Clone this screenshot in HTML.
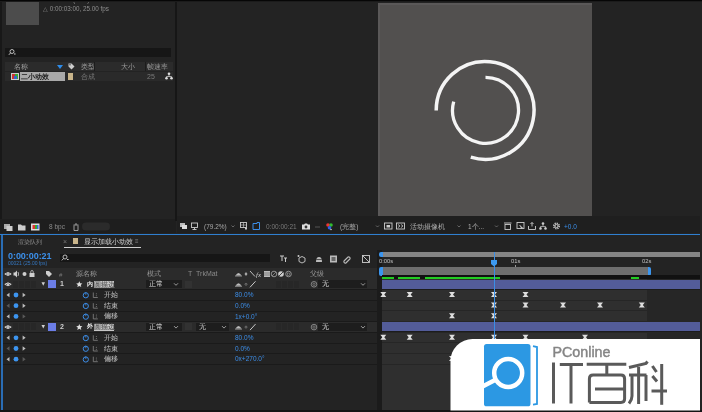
<!DOCTYPE html>
<html><head><meta charset="utf-8">
<style>
*{margin:0;padding:0;box-sizing:border-box}
html,body{width:702px;height:412px;overflow:hidden;background:#232323;font-family:"Liberation Sans",sans-serif;color:#9a9a9a}
.a{position:absolute}
.t{position:absolute;font-size:7px;line-height:8px;white-space:nowrap;will-change:transform}
svg{position:absolute;left:0;top:0}
body{-webkit-font-smoothing:antialiased}
.ga{will-change:transform}
</style></head><body>

<div class="a" style="left:0px;top:0px;width:702px;height:412px;background:#232323;"></div>
<div class="a" style="left:0px;top:2px;width:2px;height:231px;background:#181818;"></div>
<div class="a" style="left:6px;top:0px;width:33px;height:25px;background:#4c4c4c;"></div>
<div class="t" style="left:43px;top:-4.5px;color:#8a8a8a;font-size:6.3px;line-height:7.3px;">999 × 999 (1.00)</div>
<div class="t" style="left:43px;top:4.5px;color:#8e8e8e;font-size:6.3px;line-height:7.3px;">△ 0:00:03:00, 25.00 fps</div>
<div class="a" style="left:5px;top:48px;width:166px;height:9px;background:#161616;"></div>
<div class="a" style="left:5px;top:62px;width:168px;height:9px;background:#2b2b2b;"></div>
<div class="t" style="left:14px;top:62.5px;color:#a0a0a0;font-size:7px;line-height:8px;">名称</div>
<div class="a" style="left:57px;top:65px;width:0;height:0;border-left:3px solid transparent;border-right:3px solid transparent;border-top:4px solid #2d8ceb"></div>
<div class="t" style="left:81px;top:62.5px;color:#9a9a9a;font-size:7px;line-height:8px;">类型</div>
<div class="t" style="left:121px;top:62.5px;color:#9a9a9a;font-size:7px;line-height:8px;">大小</div>
<div class="t" style="left:147px;top:62.5px;color:#9a9a9a;font-size:7px;line-height:8px;">帧速率</div>
<div class="a" style="left:5px;top:72px;width:168px;height:9px;background:#2a2a2a;"></div>
<div class="a" style="left:94px;top:62px;width:1px;height:9px;background:#1c1c1c;"></div>
<div class="a" style="left:144.5px;top:62px;width:1px;height:9px;background:#1c1c1c;"></div>
<svg width="702" height="412"><rect x="11" y="73" width="8" height="7" fill="#ccc"/><rect x="12" y="74" width="3" height="5" fill="#c33"/><rect x="15" y="74" width="3" height="5" fill="#3a3"/><rect x="14" y="76" width="3" height="3" fill="#36c"/><path d="M68.5,63.5h3l3,3 -3,3 -3,-3z" fill="#ccc"/><circle cx="70" cy="64.8" r="0.7" fill="#333"/><circle cx="169" cy="73.7" r="1.3" fill="#ddd"/><circle cx="166.5" cy="78.3" r="1.3" fill="#ddd"/><circle cx="171.5" cy="78.3" r="1.3" fill="#ddd"/><path d="M169,74v2.5 M166.5,78v-1.5h5v1.5" fill="none" stroke="#ddd" stroke-width="0.7"/></svg>
<div class="a" style="left:20px;top:72px;width:45px;height:9px;background:#a9a9a9;"></div>
<div class="t" style="left:21px;top:72.5px;color:#1a1a1a;font-size:6.8px;line-height:7.8px;font-weight:bold">二小动效</div>
<div class="a" style="left:68px;top:73px;width:5px;height:7px;background:#c8b48a;"></div>
<div class="t" style="left:81px;top:72.5px;color:#7a7a7a;font-size:7px;line-height:8px;">合成</div>
<div class="t" style="left:147px;top:72.5px;color:#7a7a7a;font-size:7px;line-height:8px;">25</div>
<div class="a" style="left:0px;top:219px;width:176px;height:14px;background:#1e1e1e;"></div>
<div class="a" style="left:175px;top:0px;width:1.6px;height:221px;background:#161616;"></div>
<div class="a" style="left:378px;top:3.4px;width:214px;height:212.6px;background:#52504f;"></div>
<div class="a" style="left:378px;top:3.4px;width:1.6px;height:212.6px;background:#5a5858;"></div>
<div class="a" style="left:378px;top:3.4px;width:214px;height:1.2px;background:#5a5858;"></div>
<svg width="702" height="412">
  <path d="M 436.2 110.4 A 48.9 48.9 0 1 1 470.8 157.2" fill="none" stroke="#f4f4f4" stroke-width="3.5"/>
  <path d="M 485.5 77.3 A 33 33 0 1 1 453.7 101.6" fill="none" stroke="#f4f4f4" stroke-width="3.3"/>
</svg>
<div class="a" style="left:177px;top:216px;width:523px;height:17px;background:#1f1f1f;"></div>
<div class="a" style="left:0px;top:233.8px;width:700px;height:1.4px;background:#2f7fd0;"></div>
<svg width="702" height="412">
<rect x="4" y="224" width="6" height="5" fill="#aaa"/><rect x="6.5" y="226" width="6" height="5" fill="#ccc"/>
<path d="M18,224.5h3l1,1h3.5v5h-7.5z" fill="#ccc"/>
<rect x="31" y="223.5" width="8.5" height="7" fill="#ddd"/><rect x="32.5" y="225" width="2.5" height="4" fill="#d33"/><rect x="35" y="225" width="2.5" height="4" fill="#3a3"/><rect x="37" y="225" width="1.5" height="4" fill="#36d"/>
<path d="M73.5,225h5 M74,225.5v5h4v-5 M75,224h2" fill="none" stroke="#aaa" stroke-width="0.9"/>
<rect x="82" y="222.5" width="28" height="8" rx="4" fill="#2b2b2b"/>
<rect x="180" y="223" width="5" height="4" fill="#bbb"/><rect x="182" y="225" width="5" height="4" fill="#ddd"/>
<rect x="191.5" y="223" width="6" height="4.5" fill="none" stroke="#ccc" stroke-width="0.9"/><path d="M194.5,227.5v2 M192.5,229.5h4" stroke="#ccc" stroke-width="0.9"/>
<path d="M231.5,225.5l1.5,1.5 1.5,-1.5" fill="none" stroke="#777" stroke-width="0.8"/>
<rect x="240.5" y="222.5" width="6" height="5" fill="none" stroke="#ccc" stroke-width="0.9"/><path d="M243.5,222.5v5 M240.5,225h6" stroke="#ccc" stroke-width="0.6"/><rect x="245" y="227.5" width="2" height="2" fill="#ccc"/>
<path d="M253,223.5h4v-1h2.5v7h-6.5z" fill="none" stroke="#3b8ee8" stroke-width="1"/>
<path d="M302,224.5h2l1,-1h2l1,1h2v5h-8z" fill="#ddd"/><circle cx="306" cy="227" r="1.4" fill="#333"/>
<path d="M315,227h5" stroke="#555" stroke-width="1"/>
<circle cx="328" cy="225" r="1.8" fill="#e33"/><circle cx="331" cy="225" r="1.8" fill="#3c3" opacity="0.9"/><circle cx="329.5" cy="227.8" r="1.8" fill="#36f" opacity="0.9"/><circle cx="331" cy="229.5" r="0.8" fill="#ccc"/>
<path d="M376,225.5l1.5,1.5 1.5,-1.5" fill="none" stroke="#777" stroke-width="0.8"/>
<rect x="384.5" y="223" width="7.5" height="6" fill="none" stroke="#ccc" stroke-width="0.9"/><rect x="386.5" y="225" width="3.5" height="2.5" fill="#ccc"/>
<rect x="396.5" y="223" width="8" height="6" fill="none" stroke="#ccc" stroke-width="0.9"/><path d="M398,224.5l2,1.5 -2,1.5 M401,224.5l2,1.5 -2,1.5" fill="none" stroke="#ccc" stroke-width="0.8"/>
<path d="M457.5,225.5l1.5,1.5 1.5,-1.5" fill="none" stroke="#777" stroke-width="0.8"/>
<path d="M495,225.5l1.5,1.5 1.5,-1.5" fill="none" stroke="#777" stroke-width="0.8"/>
<path d="M504,223h7.5" stroke="#ccc" stroke-width="0.9"/><rect x="505" y="224.5" width="5.5" height="5" fill="none" stroke="#ccc" stroke-width="0.9"/>
<rect x="517" y="222.5" width="7" height="6" fill="none" stroke="#ccc" stroke-width="0.9"/><path d="M519.5,225l3,3 -1.5,0.3" fill="#ccc" stroke="#ccc" stroke-width="0.8"/>
<path d="M528.5,226v3.5h7v-3.5" fill="none" stroke="#ccc" stroke-width="0.9"/><path d="M532,222.5v4 M530.5,224l1.5,-1.5 1.5,1.5" fill="none" stroke="#ccc" stroke-width="0.9"/>
<circle cx="543" cy="223.5" r="1.3" fill="#ccc"/><circle cx="540.5" cy="228.5" r="1.3" fill="#ccc"/><circle cx="545.5" cy="228.5" r="1.3" fill="#ccc"/><path d="M543,224v2.5 M540.5,228v-1.5h5v1.5" fill="none" stroke="#ccc" stroke-width="0.7"/>
<circle cx="556.5" cy="226" r="2.7" fill="none" stroke="#ccc" stroke-width="1.6" stroke-dasharray="1.2 0.9"/><circle cx="556.5" cy="226" r="1.6" fill="none" stroke="#ccc" stroke-width="1"/>
</svg>
<div class="t" style="left:49px;top:223px;color:#8a8a8a;font-size:6.5px;line-height:7.5px;">8 bpc</div>
<div class="t" style="left:204px;top:222.5px;color:#a8a8a8;font-size:6.5px;line-height:7.5px;">(79.2%)</div>
<div class="t" style="left:266px;top:222.5px;color:#7a7a7a;font-size:6.5px;line-height:7.5px;">0:00:00:21</div>
<div class="t" style="left:339.5px;top:222.5px;color:#a8a8a8;font-size:6.5px;line-height:7.5px;">(完整)</div>
<div class="t" style="left:410px;top:222.5px;color:#b0b0b0;font-size:6.5px;line-height:7.5px;">活动摄像机</div>
<div class="t" style="left:468px;top:222.5px;color:#b0b0b0;font-size:6.5px;line-height:7.5px;">1个...</div>
<div class="t" style="left:563.5px;top:222.5px;color:#3b8ee8;font-size:6.5px;line-height:7.5px;">+0.0</div>
<div class="a" style="left:1px;top:235px;width:2px;height:177px;background:#2a6db5;"></div>
<div class="t" style="left:18px;top:238.3px;color:#8e8e8e;font-size:6.3px;line-height:7.3px;">渲染队列</div>
<div class="t" style="left:63px;top:238px;color:#777;font-size:7px;line-height:8px;">×</div>
<div class="a" style="left:73px;top:238px;width:5px;height:6px;background:#c9b48a;"></div>
<div class="t" style="left:84px;top:238.3px;color:#d0d0d0;font-size:6.5px;line-height:7.5px;">显示加载小动效</div>
<div class="t" style="left:135px;top:238.3px;color:#888;font-size:6px;line-height:7px;">≡</div>
<div class="a" style="left:64px;top:247px;width:77px;height:1px;background:#cfcfcf;"></div>
<div class="t" style="left:8px;top:251px;color:#3b8fea;font-size:9px;line-height:10px;font-weight:bold;letter-spacing:-0.05px">0:00:00:21</div>
<div class="t" style="left:8px;top:260px;color:#3577c0;font-size:5px;line-height:6px;">00021 (25.00 fps)</div>
<div class="a" style="left:60px;top:254px;width:210px;height:8px;background:#161616;"></div>
<div class="a" style="left:3px;top:268px;width:375px;height:11px;background:#2b2b2b;"></div>
<div class="t" style="left:76px;top:270px;color:#9a9a9a;font-size:7px;line-height:8px;">源名称</div>
<div class="t" style="left:147px;top:270px;color:#9a9a9a;font-size:7px;line-height:8px;">模式</div>
<div class="t" style="left:188px;top:270px;color:#8a8a8a;font-size:7px;line-height:8px;">T&nbsp; TrkMat</div>
<div class="t" style="left:309.5px;top:270px;color:#9a9a9a;font-size:7px;line-height:8px;">父级</div>
<div class="a" style="left:3px;top:279.1px;width:375px;height:10.7px;background:#2b2b2b;"></div>
<div class="a" style="left:3px;top:289.2px;width:375px;height:0.6px;background:#1a1a1a;"></div>
<div class="a" style="left:3px;top:299.9px;width:375px;height:0.6px;background:#1a1a1a;"></div>
<div class="a" style="left:3px;top:310.59999999999997px;width:375px;height:0.6px;background:#1a1a1a;"></div>
<div class="a" style="left:3px;top:321.3px;width:375px;height:0.6px;background:#1a1a1a;"></div>
<div class="a" style="left:3px;top:321.90000000000003px;width:375px;height:10.7px;background:#2b2b2b;"></div>
<div class="a" style="left:3px;top:332.0px;width:375px;height:0.6px;background:#1a1a1a;"></div>
<div class="a" style="left:3px;top:342.7px;width:375px;height:0.6px;background:#1a1a1a;"></div>
<div class="a" style="left:3px;top:353.4px;width:375px;height:0.6px;background:#1a1a1a;"></div>
<div class="a" style="left:3px;top:364.09999999999997px;width:375px;height:0.6px;background:#1a1a1a;"></div>
<div class="a" style="left:13px;top:280.6px;width:5px;height:7px;background:#272727;"></div>
<div class="a" style="left:19px;top:280.6px;width:5px;height:7px;background:#272727;"></div>
<div class="a" style="left:25px;top:280.6px;width:5px;height:7px;background:#272727;"></div>
<div class="a" style="left:31px;top:280.6px;width:5px;height:7px;background:#272727;"></div>
<div class="a" style="left:48px;top:280.1px;width:8px;height:8px;background:#6b7de6;"></div>
<div class="t" style="left:60px;top:280.3px;color:#d0d0d0;font-size:7px;line-height:8px;font-weight:bold">1</div>
<div class="t" style="left:87.3px;top:280.6px;color:#f0f0f0;font-size:6px;line-height:7px;font-weight:bold">内</div>
<div class="a" style="left:93.5px;top:281.1px;width:20.5px;height:7.2px;background:#c6c6c6;"></div>
<div class="t" style="left:94px;top:280.6px;color:#666;font-size:6.5px;line-height:7.5px;font-weight:bold">圆描边</div>
<div class="a" style="left:146px;top:280.1px;width:36px;height:8.4px;background:#1d1d1d;"></div>
<div class="t" style="left:149px;top:280.3px;color:#d8d8d8;font-size:7px;line-height:8px;">正常</div>
<div class="a" style="left:185.4px;top:280.6px;width:7px;height:7px;background:#323232;"></div>
<div class="a" style="left:276px;top:280.6px;width:5px;height:7px;background:#272727;"></div>
<div class="a" style="left:282px;top:280.6px;width:5px;height:7px;background:#272727;"></div>
<div class="a" style="left:288px;top:280.6px;width:5px;height:7px;background:#272727;"></div>
<div class="a" style="left:294px;top:280.6px;width:5px;height:7px;background:#272727;"></div>
<div class="a" style="left:318px;top:280.1px;width:49.4px;height:8.4px;background:#1d1d1d;"></div>
<div class="t" style="left:321.5px;top:280.3px;color:#e0e0e0;font-size:7px;line-height:8px;">无</div>
<div class="t" style="left:103.7px;top:291.0px;color:#c8c8c8;font-size:7px;line-height:8px;">开始</div>
<div class="t" style="left:235px;top:291.1px;color:#3d8ee8;font-size:6.5px;line-height:7.5px;">80.0%</div>
<div class="t" style="left:103.7px;top:301.7px;color:#c8c8c8;font-size:7px;line-height:8px;">结束</div>
<div class="t" style="left:235px;top:301.8px;color:#3d8ee8;font-size:6.5px;line-height:7.5px;">0.0%</div>
<div class="t" style="left:103.7px;top:312.40000000000003px;color:#c8c8c8;font-size:7px;line-height:8px;">偏移</div>
<div class="t" style="left:235px;top:312.50000000000006px;color:#3d8ee8;font-size:6.5px;line-height:7.5px;">1x+0.0°</div>
<div class="a" style="left:13px;top:323.40000000000003px;width:5px;height:7px;background:#272727;"></div>
<div class="a" style="left:19px;top:323.40000000000003px;width:5px;height:7px;background:#272727;"></div>
<div class="a" style="left:25px;top:323.40000000000003px;width:5px;height:7px;background:#272727;"></div>
<div class="a" style="left:31px;top:323.40000000000003px;width:5px;height:7px;background:#272727;"></div>
<div class="a" style="left:48px;top:322.90000000000003px;width:8px;height:8px;background:#6b7de6;"></div>
<div class="t" style="left:60px;top:323.1px;color:#d0d0d0;font-size:7px;line-height:8px;font-weight:bold">2</div>
<div class="t" style="left:87.3px;top:323.40000000000003px;color:#f0f0f0;font-size:6px;line-height:7px;font-weight:bold">外</div>
<div class="a" style="left:93.5px;top:323.90000000000003px;width:20.5px;height:7.2px;background:#c6c6c6;"></div>
<div class="t" style="left:94px;top:323.40000000000003px;color:#666;font-size:6.5px;line-height:7.5px;font-weight:bold">圆描边</div>
<div class="a" style="left:146px;top:322.90000000000003px;width:36px;height:8.4px;background:#1d1d1d;"></div>
<div class="t" style="left:149px;top:323.1px;color:#d8d8d8;font-size:7px;line-height:8px;">正常</div>
<div class="a" style="left:185.4px;top:323.40000000000003px;width:7px;height:7px;background:#323232;"></div>
<div class="a" style="left:196px;top:322.90000000000003px;width:33.3px;height:8.4px;background:#1d1d1d;"></div>
<div class="t" style="left:199px;top:323.1px;color:#d8d8d8;font-size:7px;line-height:8px;">无</div>
<div class="a" style="left:276px;top:323.40000000000003px;width:5px;height:7px;background:#272727;"></div>
<div class="a" style="left:282px;top:323.40000000000003px;width:5px;height:7px;background:#272727;"></div>
<div class="a" style="left:288px;top:323.40000000000003px;width:5px;height:7px;background:#272727;"></div>
<div class="a" style="left:294px;top:323.40000000000003px;width:5px;height:7px;background:#272727;"></div>
<div class="a" style="left:318px;top:322.90000000000003px;width:49.4px;height:8.4px;background:#1d1d1d;"></div>
<div class="t" style="left:321.5px;top:323.1px;color:#e0e0e0;font-size:7px;line-height:8px;">无</div>
<div class="t" style="left:103.7px;top:333.8px;color:#c8c8c8;font-size:7px;line-height:8px;">开始</div>
<div class="t" style="left:235px;top:333.90000000000003px;color:#3d8ee8;font-size:6.5px;line-height:7.5px;">80.0%</div>
<div class="t" style="left:103.7px;top:344.5px;color:#c8c8c8;font-size:7px;line-height:8px;">结束</div>
<div class="t" style="left:235px;top:344.6px;color:#3d8ee8;font-size:6.5px;line-height:7.5px;">0.0%</div>
<div class="t" style="left:103.7px;top:355.2px;color:#c8c8c8;font-size:7px;line-height:8px;">偏移</div>
<div class="t" style="left:235px;top:355.3px;color:#3d8ee8;font-size:6.5px;line-height:7.5px;">0x+270.0°</div>
<svg width="702" height="412">
<path d="M4.8,274 Q8,271 11.2,274 Q8,277 4.8,274Z" fill="none" stroke="#cfcfcf" stroke-width="1"/><circle cx="8" cy="274" r="1.1" fill="#cfcfcf"/>
<path d="M13.5,272.5h1.5l2,-2v7l-2,-2h-1.5z" fill="#cfcfcf"/><path d="M18,272 q1.2,2 0,4" fill="none" stroke="#cfcfcf" stroke-width="0.8"/>
<circle cx="24.5" cy="274" r="2" fill="#cfcfcf"/>
<rect x="29.5" y="273" width="5" height="4" fill="#cfcfcf"/><path d="M30.8,273 v-1.3 a1.2,1.2 0 0 1 2.4,0 v1.3" fill="none" stroke="#cfcfcf" stroke-width="0.8"/>
<path d="M46,271 h3 l3,3 l-3,3 l-3,-3z" fill="#cfcfcf"/>
<text x="59" y="276.5" font-size="6" fill="#777" font-family="Liberation Sans">#</text>
<path d="M4.8,284.3 Q8,281.3 11.2,284.3 Q8,287.3 4.8,284.3Z" fill="none" stroke="#cfcfcf" stroke-width="1"/><circle cx="8" cy="284.3" r="1.1" fill="#cfcfcf"/>
<path d="M41.5,282.3 h3.5 l-1.75,3.5z" fill="#d0d0d0"/>
<path d="M79.3,281.3 l0.9,2 2.2,0.2 -1.7,1.4 0.6,2.2 -2,-1.2 -2,1.2 0.6,-2.2 -1.7,-1.4 2.2,-0.2z" fill="#e0e0e0"/>
<path d="M174,283.3 l2,2 2,-2" fill="none" stroke="#aaa" stroke-width="0.9"/>
<path d="M235.5,285.8 q3,-5 6,0z" fill="#bbb"/><path d="M235,286.3 h7" stroke="#bbb" stroke-width="0.7"/>
<circle cx="246" cy="284.3" r="1" fill="none" stroke="#888" stroke-width="0.7"/>
<path d="M250,287.3 l5.5,-6" stroke="#ddd" stroke-width="0.9"/>
<circle cx="314" cy="284.3" r="2.8" fill="none" stroke="#999" stroke-width="0.8"/><circle cx="314" cy="284.3" r="1.2" fill="none" stroke="#999" stroke-width="0.6"/>
<path d="M361,283.3 l2,2 2,-2" fill="none" stroke="#aaa" stroke-width="0.9"/>
<path d="M9.5,292.8 v4.4 l-3,-2.2z" fill="#bdbdbd"/>
<circle cx="16" cy="295.0" r="2.4" fill="#3d95f0"/>
<path d="M22.6,292.8 v4.4 l3,-2.2z" fill="#bdbdbd"/>
<circle cx="85.8" cy="295.3" r="2.6" fill="none" stroke="#3d8ee8" stroke-width="1"/><path d="M85.8,292.2 v2.6" stroke="#3d8ee8" stroke-width="0.8"/>
<path d="M93.3,292.5 v5 h4.5" fill="none" stroke="#888" stroke-width="0.8"/><circle cx="96.3" cy="293.7" r="0.5" fill="#888"/><circle cx="96.3" cy="295.7" r="0.5" fill="#888"/>
<path d="M9.5,303.5 v4.4 l-3,-2.2z" fill="#5a5a5a"/>
<circle cx="16" cy="305.7" r="2.4" fill="#3d95f0"/>
<path d="M22.6,303.5 v4.4 l3,-2.2z" fill="#bdbdbd"/>
<circle cx="85.8" cy="306.0" r="2.6" fill="none" stroke="#3d8ee8" stroke-width="1"/><path d="M85.8,302.9 v2.6" stroke="#3d8ee8" stroke-width="0.8"/>
<path d="M93.3,303.2 v5 h4.5" fill="none" stroke="#888" stroke-width="0.8"/><circle cx="96.3" cy="304.4" r="0.5" fill="#888"/><circle cx="96.3" cy="306.4" r="0.5" fill="#888"/>
<path d="M9.5,314.20000000000005 v4.4 l-3,-2.2z" fill="#bdbdbd"/>
<circle cx="16" cy="316.40000000000003" r="2.4" fill="#3d95f0"/>
<path d="M22.6,314.20000000000005 v4.4 l3,-2.2z" fill="#5a5a5a"/>
<circle cx="85.8" cy="316.70000000000005" r="2.6" fill="none" stroke="#3d8ee8" stroke-width="1"/><path d="M85.8,313.6 v2.6" stroke="#3d8ee8" stroke-width="0.8"/>
<path d="M93.3,313.90000000000003 v5 h4.5" fill="none" stroke="#888" stroke-width="0.8"/><circle cx="96.3" cy="315.1" r="0.5" fill="#888"/><circle cx="96.3" cy="317.1" r="0.5" fill="#888"/>
<path d="M4.8,327.1 Q8,324.1 11.2,327.1 Q8,330.1 4.8,327.1Z" fill="none" stroke="#cfcfcf" stroke-width="1"/><circle cx="8" cy="327.1" r="1.1" fill="#cfcfcf"/>
<path d="M41.5,325.1 h3.5 l-1.75,3.5z" fill="#d0d0d0"/>
<path d="M79.3,324.1 l0.9,2 2.2,0.2 -1.7,1.4 0.6,2.2 -2,-1.2 -2,1.2 0.6,-2.2 -1.7,-1.4 2.2,-0.2z" fill="#e0e0e0"/>
<path d="M174,326.1 l2,2 2,-2" fill="none" stroke="#aaa" stroke-width="0.9"/>
<path d="M222,326.1 l2,2 2,-2" fill="none" stroke="#aaa" stroke-width="0.9"/>
<path d="M235.5,328.6 q3,-5 6,0z" fill="#bbb"/><path d="M235,329.1 h7" stroke="#bbb" stroke-width="0.7"/>
<circle cx="246" cy="327.1" r="1" fill="none" stroke="#888" stroke-width="0.7"/>
<path d="M250,330.1 l5.5,-6" stroke="#ddd" stroke-width="0.9"/>
<circle cx="314" cy="327.1" r="2.8" fill="none" stroke="#999" stroke-width="0.8"/><circle cx="314" cy="327.1" r="1.2" fill="none" stroke="#999" stroke-width="0.6"/>
<path d="M361,326.1 l2,2 2,-2" fill="none" stroke="#aaa" stroke-width="0.9"/>
<path d="M9.5,335.6 v4.4 l-3,-2.2z" fill="#bdbdbd"/>
<circle cx="16" cy="337.8" r="2.4" fill="#3d95f0"/>
<path d="M22.6,335.6 v4.4 l3,-2.2z" fill="#bdbdbd"/>
<circle cx="85.8" cy="338.1" r="2.6" fill="none" stroke="#3d8ee8" stroke-width="1"/><path d="M85.8,335.0 v2.6" stroke="#3d8ee8" stroke-width="0.8"/>
<path d="M93.3,335.3 v5 h4.5" fill="none" stroke="#888" stroke-width="0.8"/><circle cx="96.3" cy="336.5" r="0.5" fill="#888"/><circle cx="96.3" cy="338.5" r="0.5" fill="#888"/>
<path d="M9.5,346.3 v4.4 l-3,-2.2z" fill="#5a5a5a"/>
<circle cx="16" cy="348.5" r="2.4" fill="#3d95f0"/>
<path d="M22.6,346.3 v4.4 l3,-2.2z" fill="#bdbdbd"/>
<circle cx="85.8" cy="348.8" r="2.6" fill="none" stroke="#3d8ee8" stroke-width="1"/><path d="M85.8,345.7 v2.6" stroke="#3d8ee8" stroke-width="0.8"/>
<path d="M93.3,346.0 v5 h4.5" fill="none" stroke="#888" stroke-width="0.8"/><circle cx="96.3" cy="347.2" r="0.5" fill="#888"/><circle cx="96.3" cy="349.2" r="0.5" fill="#888"/>
<path d="M9.5,357.0 v4.4 l-3,-2.2z" fill="#bdbdbd"/>
<circle cx="16" cy="359.2" r="2.4" fill="#3d95f0"/>
<path d="M22.6,357.0 v4.4 l3,-2.2z" fill="#5a5a5a"/>
<circle cx="85.8" cy="359.5" r="2.6" fill="none" stroke="#3d8ee8" stroke-width="1"/><path d="M85.8,356.4 v2.6" stroke="#3d8ee8" stroke-width="0.8"/>
<path d="M93.3,356.7 v5 h4.5" fill="none" stroke="#888" stroke-width="0.8"/><circle cx="96.3" cy="357.9" r="0.5" fill="#888"/><circle cx="96.3" cy="359.9" r="0.5" fill="#888"/>
</svg>
<svg width="702" height="412">
<circle cx="65" cy="257" r="2" fill="none" stroke="#ccc" stroke-width="0.9"/><path d="M63.6,258.4 l-1.8,2" stroke="#ccc" stroke-width="0.9"/><path d="M67,259.5h1.6" stroke="#ccc" stroke-width="1"/>
<circle cx="12" cy="51.5" r="2" fill="none" stroke="#ccc" stroke-width="0.9"/><path d="M10.6,52.9 l-1.8,2" stroke="#ccc" stroke-width="0.9"/><path d="M14,54h1.6" stroke="#ccc" stroke-width="1"/>
<path d="M280,256h4 M282,256v5 M284,258h3 M285.5,258v4" stroke="#ccc" stroke-width="1" fill="none"/>
<circle cx="298.5" cy="256" r="1" fill="#ccc"/><path d="M299,258 l3,-1.5 3,1.5 v3.5 l-3,1.5 -3,-1.5z" fill="none" stroke="#ccc" stroke-width="0.9"/>
<path d="M316,262 q0,-5 3,-5 q3,0 3,5z" fill="#bbb"/><rect x="316" y="259" width="6" height="1" fill="#555"/>
<rect x="330" y="255.5" width="7" height="7" fill="#bbb"/><rect x="331.5" y="257" width="4" height="4" fill="#666"/>
<path d="M344,261 l4,-4 a1.5,1.5 0 0 1 2,2 l-4,4 a1.5,1.5 0 0 1 -2,-2z" fill="none" stroke="#bbb" stroke-width="1.1"/><path d="M346,262 l4,-4" stroke="#777" stroke-width="0.8"/>
<rect x="362.5" y="255.5" width="7" height="7" fill="none" stroke="#ccc" stroke-width="0.9"/><path d="M363,256 l6,6" stroke="#ccc" stroke-width="0.9"/>
<path d="M235.5,275.5 q3,-5 6,0z" fill="#bbb"/><path d="M235,276 h7" stroke="#bbb" stroke-width="0.7"/>
<path d="M246,272 l1.5,2 -1.5,2 -1.5,-2z" fill="#aaa"/>
<path d="M250,271 l5,5.5" stroke="#ccc" stroke-width="0.9"/>
<text x="256" y="276.8" font-size="7" font-style="italic" fill="#ccc" font-family="Liberation Serif">fx</text>
<rect x="264" y="271" width="6" height="6" fill="#bbb"/><path d="M264,273h6 M264,275h6" stroke="#555" stroke-width="0.6"/>
<circle cx="274" cy="274" r="2.8" fill="none" stroke="#aaa" stroke-width="0.8"/><path d="M272,276l4,-4" stroke="#aaa" stroke-width="0.6"/>
<circle cx="281" cy="274" r="2.8" fill="#ccc"/><path d="M279,276l4,-4" stroke="#333" stroke-width="0.9"/>
<circle cx="288.5" cy="274" r="2.8" fill="none" stroke="#aaa" stroke-width="0.8"/><rect x="287.3" y="273" width="2.4" height="2.4" fill="none" stroke="#aaa" stroke-width="0.5"/>
</svg>
<div class="a" style="left:377px;top:250px;width:5px;height:162px;background:#1b1b1b;"></div>
<div class="a" style="left:382px;top:279px;width:318px;height:133px;background:#262626;"></div>
<div class="a" style="left:382px;top:279px;width:265px;height:133px;background:#2f2f2f;"></div>
<div class="a" style="left:383px;top:252px;width:317px;height:5px;background:#858585;"></div>
<div class="a" style="left:379px;top:252px;width:4px;height:5px;background:#3b95ee;border-radius:2px 0 0 2px"></div>
<div class="t" style="left:379px;top:257.8px;color:#c0c0c0;font-size:5.8px;line-height:6.8px;">0:00s</div>
<div class="t" style="left:511px;top:257.8px;color:#c0c0c0;font-size:5.8px;line-height:6.8px;">01s</div>
<div class="t" style="left:641.5px;top:257.8px;color:#c0c0c0;font-size:5.8px;line-height:6.8px;">02s</div>
<div class="a" style="left:515px;top:265px;width:0.7px;height:4px;background:#999;"></div>
<div class="a" style="left:383px;top:267px;width:265px;height:8px;background:#6e6e6e;"></div>
<div class="a" style="left:379px;top:267px;width:4px;height:9px;background:#3b95ee;border-radius:2px 0 0 2px"></div>
<div class="a" style="left:648px;top:267px;width:3px;height:9px;background:#3b95ee;border-radius:0 2px 2px 0"></div>
<div class="a" style="left:382px;top:275px;width:318px;height:4px;background:#111;"></div>
<div class="a" style="left:382px;top:276.5px;width:12px;height:2px;background:#22cc22;"></div>
<div class="a" style="left:398px;top:276.5px;width:22px;height:2px;background:#22cc22;"></div>
<div class="a" style="left:425px;top:276.5px;width:75px;height:2px;background:#22cc22;"></div>
<div class="a" style="left:631px;top:276.5px;width:7.5px;height:2px;background:#22cc22;"></div>
<div class="a" style="left:382px;top:288.8px;width:318px;height:1px;background:#262626;"></div>
<div class="a" style="left:382px;top:299.5px;width:318px;height:1px;background:#262626;"></div>
<div class="a" style="left:382px;top:310.2px;width:318px;height:1px;background:#262626;"></div>
<div class="a" style="left:382px;top:320.90000000000003px;width:318px;height:1px;background:#262626;"></div>
<div class="a" style="left:382px;top:331.6px;width:318px;height:1px;background:#262626;"></div>
<div class="a" style="left:382px;top:342.3px;width:318px;height:1px;background:#262626;"></div>
<div class="a" style="left:382px;top:353.0px;width:318px;height:1px;background:#262626;"></div>
<div class="a" style="left:382px;top:363.7px;width:318px;height:1px;background:#262626;"></div>
<div class="a" style="left:382px;top:279.5px;width:318px;height:9.2px;background:#535c99;"></div>
<div class="a" style="left:382px;top:288.6px;width:318px;height:1.1px;background:#1c1c1c;"></div>
<div class="a" style="left:382px;top:322.3px;width:318px;height:9.2px;background:#535c99;"></div>
<div class="a" style="left:382px;top:331.40000000000003px;width:318px;height:1.1px;background:#1c1c1c;"></div>
<svg width="702" height="412">
<path d="M380.3,291.9h6l-2,2.5l2,2.5h-6l2,-2.5z" fill="#dedede"/>
<path d="M406.7,291.9h6l-2,2.5l2,2.5h-6l2,-2.5z" fill="#dedede"/>
<path d="M449.0,291.9h6l-2,2.5l2,2.5h-6l2,-2.5z" fill="#dedede"/>
<path d="M491.0,291.9h6l-2,2.5l2,2.5h-6l2,-2.5z" fill="#dedede"/>
<path d="M522.5,291.9h6l-2,2.5l2,2.5h-6l2,-2.5z" fill="#dedede"/>
<path d="M491.0,302.6h6l-2,2.5l2,2.5h-6l2,-2.5z" fill="#dedede"/>
<path d="M522.5,302.6h6l-2,2.5l2,2.5h-6l2,-2.5z" fill="#dedede"/>
<path d="M560.0,302.6h6l-2,2.5l2,2.5h-6l2,-2.5z" fill="#dedede"/>
<path d="M597.0,302.6h6l-2,2.5l2,2.5h-6l2,-2.5z" fill="#dedede"/>
<path d="M638.8,302.6h6l-2,2.5l2,2.5h-6l2,-2.5z" fill="#dedede"/>
<path d="M449.0,313.3h6l-2,2.5l2,2.5h-6l2,-2.5z" fill="#dedede"/>
<path d="M491.0,313.3h6l-2,2.5l2,2.5h-6l2,-2.5z" fill="#dedede"/>
<path d="M380.3,334.7h6l-2,2.5l2,2.5h-6l2,-2.5z" fill="#dedede"/>
<path d="M406.7,334.7h6l-2,2.5l2,2.5h-6l2,-2.5z" fill="#dedede"/>
<path d="M449.0,334.7h6l-2,2.5l2,2.5h-6l2,-2.5z" fill="#dedede"/>
<path d="M491.0,334.7h6l-2,2.5l2,2.5h-6l2,-2.5z" fill="#dedede"/>
<path d="M522.5,334.7h6l-2,2.5l2,2.5h-6l2,-2.5z" fill="#dedede"/>
<path d="M582.0,334.7h6l-2,2.5l2,2.5h-6l2,-2.5z" fill="#dedede"/>
<path d="M491.0,345.4h6l-2,2.5l2,2.5h-6l2,-2.5z" fill="#dedede"/>
<path d="M522.5,345.4h6l-2,2.5l2,2.5h-6l2,-2.5z" fill="#dedede"/>
<path d="M560.0,345.4h6l-2,2.5l2,2.5h-6l2,-2.5z" fill="#dedede"/>
<path d="M597.0,345.4h6l-2,2.5l2,2.5h-6l2,-2.5z" fill="#dedede"/>
<path d="M638.8,345.4h6l-2,2.5l2,2.5h-6l2,-2.5z" fill="#dedede"/>
<path d="M449.0,356.1h6l-2,2.5l2,2.5h-6l2,-2.5z" fill="#dedede"/>
<path d="M491.0,356.1h6l-2,2.5l2,2.5h-6l2,-2.5z" fill="#dedede"/>
</svg>
<div class="a" style="left:493.5px;top:252px;width:1px;height:160px;background:#3a8ee6;"></div>
<svg width="702" height="412"><path d="M491,260h6v4l-3,2.5l-3,-2.5z" fill="#3d9af0"/></svg>
<div class="a" style="left:0px;top:410.3px;width:702px;height:1.7px;background:#141414;"></div>
<svg class="ga" width="702" height="412">
<defs><clipPath id="rc"><rect x="484" y="344" width="46.5" height="62.3" rx="2.6"/></clipPath></defs>
<path d="M450.5,410.5 V361 A22,22 0 0 1 472.5,339 H700 V410.5 Z" fill="#ffffff"/>
<rect x="484" y="344" width="46.5" height="62.3" rx="2.6" fill="#2c98e3"/>
<path d="M533,346.2 L537,347 V404 L533,404.6" fill="none" stroke="#2c98e3" stroke-width="1.8"/>
<g clip-path="url(#rc)">
<circle cx="508.2" cy="373" r="14" fill="none" stroke="#fff" stroke-width="4.5"/>
<path d="M496,379.5 L478,389" stroke="#fff" stroke-width="4.4"/>
</g>
<g opacity="0.999"><text x="552.5" y="357" font-family="Liberation Sans" font-size="14.3" fill="#858585" stroke="#858585" stroke-width="0.45">PConline</text></g>
<g fill="none" stroke="#5a5a5a" stroke-width="3">
<path d="M553.5,362.5 V403.5"/>
<path d="M559.8,364.5 H583 M571,364.5 V403.5"/>
<path d="M586.7,364.3 H626.3"/>
<path d="M606.8,364 V374"/>
<path d="M589.4,402.5 V378.7 Q589.4,375 593.1,375 H620.9 Q624.6,375 624.6,378.7 V398.7 Q624.6,402.4 620.9,402.4 H589.4"/>
<path d="M595,389 H624.6"/>
<path d="M629,367.5 L646,363.5 L647.5,361.5"/>
<path d="M629,375 H646.5"/>
<path d="M638.6,367 V404"/>
<path d="M632,375 V396 Q632,400 629,403.5"/>
<path d="M646,375 V401"/>
<path d="M652.4,366 L656.5,372"/>
<path d="M652.4,376 L657,381.5"/>
<path d="M651.5,391 H667"/>
<path d="M661.7,364 V404.8"/>
</g>
</svg>
<div class="a" style="left:0px;top:0px;width:702px;height:1.3px;background:#060606;"></div>
<div class="a" style="left:0px;top:1.3px;width:702px;height:0.9px;background:#1b1b1b;"></div>
</body></html>
